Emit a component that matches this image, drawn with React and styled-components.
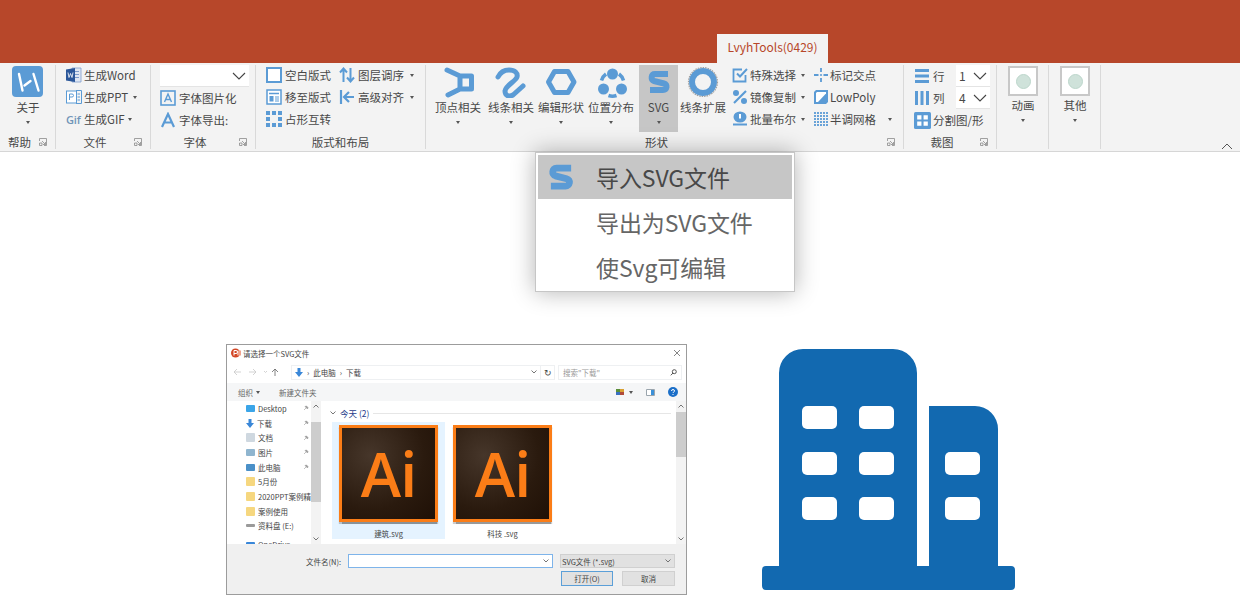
import React from "react";
import styled, { createGlobalStyle } from "styled-components";

const BLUE = "#5B9BD5";
const CJK = `"Noto Sans CJK SC", "Noto Sans", sans-serif`;

const GlobalStyle = createGlobalStyle`
  html, body {
    margin: 0;
    height: 595px;
    overflow: hidden;
    background: #ffffff;
    font-family: ${CJK};
    color: #484848;
  }
  * { box-sizing: border-box; }
`;

// Small shared pieces
const Caret = styled.span`
  display: inline-block;
  flex: none;
  width: 0;
  height: 0;
  border-left: 2.5px solid transparent;
  border-right: 2.5px solid transparent;
  border-top: 3px solid #555;
  margin-left: ${({ $gap }) => $gap ?? 0}px;
`;

const Icon = ({ size = 16, box = 16, children }) => (
  <svg width={size} height={size} viewBox={`0 0 ${box} ${box}`} style={{ flex: "none" }}>
    {children}
  </svg>
);

const Chevron = () => (
  <svg width="14" height="8" viewBox="0 0 14 8">
    <path d="M1 1l6 6 6-6" fill="none" stroke="#444" strokeWidth="1.1" />
  </svg>
);

const Launcher = () => (
  <svg width="8" height="8" viewBox="0 0 8 8">
    <path d="M.5 3V.5h7v7H5M3 3l3.5 3.5M6.5 4v2.5H4M.5 5h2.5v2.5H.5z" fill="none" stroke="#8a8a8a" strokeWidth=".8" />
  </svg>
);

const BlockS = ({ size = 32 }) => (
  <Icon size={size} box={32}>
    <path d="M25 8H12C8 8 7.5 14 11 15l10 2.500C25 18.500 24 24 20 24H7" fill="none" stroke={BLUE} strokeWidth="6" />
  </Icon>
);

// Ribbon icons
const icons = {
  logo: (
    <Icon size={32} box={32}>
      <rect width="31" height="31" rx="4" fill={BLUE} />
      <path d="M7 8l3.500 16.500M21.500 8l5 16.500M12.500 19.500l6-4.500" stroke="#fff" strokeWidth="2.400" strokeLinecap="round" fill="none" />
    </Icon>
  ),
  word: (
    <Icon>
      <path d="M6 1h9v14H6z" fill="#dfe7f3" stroke="#7d9ccc" strokeWidth=".8" />
      <path d="M9 4.500h4M9 7.500h4M9 10.500h4" stroke="#7d9ccc" />
      <path d="M0 2.500L9 1v14L0 13.500z" fill="#2b579a" />
      <path d="M2 5.500l1 5 1.500-4 1.500 4 1-5" stroke="#fff" fill="none" strokeWidth=".8" />
    </Icon>
  ),
  ppt: (
    <Icon>
      <rect x=".5" y="2" width="10" height="12" fill="#fff" stroke={BLUE} />
      <path d="M3.500 11V5h2.500a1.500 1.500 0 010 3H3.500" fill="none" stroke={BLUE} />
      <path d="M10 1.500h5.500v13H10M11.500 5H14M11.500 8H14M11.500 11H14" fill="none" stroke={BLUE} />
    </Icon>
  ),
  boxA: (
    <Icon>
      <rect x="1" y="1" width="14" height="14" fill="none" stroke={BLUE} strokeWidth="1.600" />
      <path d="M4.500 12L8 4l3.500 8M5.800 9.500h4.400" fill="none" stroke={BLUE} strokeWidth="1.400" />
    </Icon>
  ),
  plainA: (
    <Icon>
      <path d="M2 15L8 2l6 13M4.500 10.500h7" fill="none" stroke={BLUE} strokeWidth="2.200" />
    </Icon>
  ),
  blank: (
    <Icon>
      <rect x="1" y="1" width="14" height="14" fill="#fff" stroke={BLUE} strokeWidth="2" />
    </Icon>
  ),
  layout: (
    <Icon>
      <rect x="1" y="1" width="14" height="14" fill="#fff" stroke={BLUE} strokeWidth="1.500" />
      <path d="M3 4.500h10" stroke={BLUE} strokeWidth="1.500" />
      <path d="M3.500 7h4v5.500h-4z" fill={BLUE} />
      <path d="M9 8h4M9 10h4M9 12h4" stroke={BLUE} />
    </Icon>
  ),
  dots: (
    <Icon>
      <path d="M0 0h4v4H0zM6 0h4v4H6zM12 0h4v4h-4zM0 6h4v4H0zM12 6h4v4h-4zM0 12h4v4H0zM6 12h4v4H6zM12 12h4v4h-4z" fill={BLUE} />
    </Icon>
  ),
  upDown: (
    <Icon>
      <path d="M4.500 15V2M1 5.500l3.500-4 3.500 4M11.500 1v13M8 10.500l3.500 4 3.500-4" fill="none" stroke={BLUE} strokeWidth="2" />
    </Icon>
  ),
  alignLeft: (
    <Icon>
      <path d="M2 1v14M15 8H6M10 3L5 8l5 5" fill="none" stroke={BLUE} strokeWidth="2.200" />
    </Icon>
  ),
  check: (
    <Icon>
      <path d="M13.500 8v6.500h-12v-12H10" fill="none" stroke={BLUE} strokeWidth="1.800" />
      <path d="M5 6.500l3 3L15 2" fill="none" stroke={BLUE} strokeWidth="2" />
    </Icon>
  ),
  percent: (
    <Icon>
      <circle cx="4" cy="4" r="3" fill={BLUE} />
      <circle cx="12" cy="12" r="3" fill={BLUE} />
      <path d="M2 14L14 2" stroke={BLUE} strokeWidth="2.200" />
    </Icon>
  ),
  bool: (
    <Icon>
      <ellipse cx="8" cy="6" rx="6.500" ry="5.500" fill={BLUE} />
      <rect x="7" y="3" width="2" height="4.500" fill="#fff" />
      <path d="M1 13.500h14" stroke={BLUE} strokeWidth="2" />
    </Icon>
  ),
  cross: (
    <Icon>
      <path d="M8 1v4M8 11v4M1 8h4.500M10.500 8H15" stroke={BLUE} strokeWidth="1.800" />
      <circle cx="8" cy="8" r="1" fill={BLUE} />
    </Icon>
  ),
  lowPoly: (
    <Icon>
      <path d="M3 1h12v12l-2 2H1V3z" fill={BLUE} />
      <path d="M4 3h9v1.500L5 13H3V4z" fill="#fff" />
    </Icon>
  ),
  grid: (
    <Icon>
      <path d="M2 1v14M5 1v14M8 1v14M11 1v14M14 1v14" stroke={BLUE} strokeWidth="1.800" strokeDasharray="2 1" fill="none" />
    </Icon>
  ),
  rows: (
    <Icon>
      <path d="M1 2.500h14M1 8h14M1 13.500h14" stroke={BLUE} strokeWidth="3" />
    </Icon>
  ),
  cols: (
    <Icon>
      <path d="M2.500 1v14M8 1v14M13.500 1v14" stroke={BLUE} strokeWidth="3" />
    </Icon>
  ),
  split: (
    <Icon size={17}>
      <rect width="16" height="16" rx="1.500" fill={BLUE} />
      <path d="M3 3h4v4H3zM9 3h4v4H9zM3 9h4v4H3zM9 9h4v4H9z" fill="#fff" />
    </Icon>
  ),
  vertex: (
    <Icon size={32} box={32}>
      <path d="M5 4l13 6h11.500v13H18L6 29M18 10v13" fill="none" stroke={BLUE} strokeWidth="5" strokeLinecap="round" strokeLinejoin="round" />
    </Icon>
  ),
  curve: (
    <Icon size={32} box={32}>
      <path d="M3 11C6 5 11 4 14 4c6 0 9 3 8 7-1 4-11 8-12 14 0 5 4 6 8 4l10-9" fill="none" stroke={BLUE} strokeWidth="5" strokeLinecap="round" />
    </Icon>
  ),
  hexagon: (
    <Icon size={32} box={32}>
      <path d="M9.500 5.500h13.500l6 10.500-6 10.500H9.500L3.500 16z" fill="none" stroke={BLUE} strokeWidth="5" strokeLinejoin="round" />
    </Icon>
  ),
  spread: (
    <Icon size={32} box={32}>
      <circle cx="17.500" cy="8" r="5.500" fill={BLUE} />
      <circle cx="8.500" cy="23" r="5.500" fill={BLUE} />
      <circle cx="26.500" cy="23" r="5.500" fill={BLUE} />
      <path d="M6.500 14.500A12 12 0 0 1 11 8M24 8a12 12 0 0 1 4.500 6.500M13.500 29.500a12 12 0 0 0 8 0" fill="none" stroke={BLUE} strokeWidth="3.500" />
    </Icon>
  ),
  expand: (
    <Icon size={32} box={32}>
      <circle cx="16" cy="16" r="11" fill="none" stroke={BLUE} strokeWidth="6" />
      <circle cx="16" cy="16" r="14.500" fill="none" stroke="#a0a0a0" strokeWidth="1.200" strokeDasharray="1.500 1" />
    </Icon>
  ),
};

// Ribbon layout
const TitleBar = styled.header`
  height: 63px;
  background: #b7472a;
  padding-left: 717px;
  display: flex;
  align-items: flex-end;
`;

const ActiveTab = styled.div`
  width: 111px;
  height: 29px;
  background: #f3f3f3;
  color: #b7472a;
  font-size: 12px;
  line-height: 26px;
  text-align: center;
`;

const Ribbon = styled.section`
  position: relative;
  height: 89px;
  padding-top: 2px;
  background: #f3f3f3;
  border-bottom: 1px solid #d6d6d6;
  display: flex;
`;

const CollapseMark = styled.svg`
  position: absolute;
  right: 7px;
  bottom: 1px;
  width: 12px;
  height: 7px;
`;

const Group = styled.div`
  width: ${({ $w }) => $w}px;
  height: 84px;
  flex: none;
  border-right: 1px solid #d9d9d9;
  display: flex;
  flex-direction: column;
`;

const GroupBody = styled.div`
  height: 67px;
  display: flex;
  padding-left: ${({ $pad }) => $pad ?? 0}px;
  gap: ${({ $gap }) => $gap ?? 0}px;
`;

const Caption = styled.div`
  height: 17px;
  display: flex;
  align-items: center;
  font-size: 11.5px;
  line-height: 17px;
  padding-top: 3px;
`;

const CaptionText = styled.span`
  flex: 1;
  text-align: center;
`;

const LauncherSlot = styled.span`
  flex: none;
  width: 16px;
  height: 12px;
  display: flex;
  align-items: center;
`;

const Tall = styled.div`
  flex: none;
  width: ${({ $w }) => $w}px;
  height: 67px;
  padding-top: 1px;
  display: flex;
  flex-direction: column;
  align-items: center;
  background: ${({ $active }) => ($active ? "#c6c6c6" : "transparent")};
`;

const TallIcon = styled.div`
  height: ${({ $h }) => $h ?? 32}px;
  display: flex;
  align-items: center;
`;

const TallLabel = styled.div`
  font-size: 11.5px;
  line-height: 16px;
  margin-top: 1px;
  white-space: nowrap;
`;

const TallCaret = styled(Caret)`
  margin-top: 6px;
`;

const Column = styled.div`
  flex: none;
  margin-top: ${({ $top }) => $top ?? -1}px;
  margin-left: ${({ $left }) => $left ?? 0}px;
  display: flex;
  flex-direction: column;
`;

const Small = styled.div`
  height: 22px;
  display: flex;
  align-items: center;
  gap: ${({ $gap }) => $gap ?? 3}px;
  font-size: 11.5px;
  white-space: nowrap;
`;

const GifMark = styled.span`
  width: 16px;
  font-family: "Open Sans", sans-serif;
  font-size: 11px;
  font-weight: 600;
  letter-spacing: -0.2px;
  color: #6f94b8;
`;

const Combo = styled.div`
  width: ${({ $w }) => $w}px;
  height: 22px;
  background: #ffffff;
  border-bottom: 1px solid #e4e4e4;
  display: flex;
  align-items: center;
  justify-content: space-between;
  padding: 0 3px;
  font-size: 12px;
`;

const CropGrid = styled.div`
  display: grid;
  grid-template-columns: 42px 34px;
  grid-auto-rows: 22px;
  align-items: center;
`;

const CropWide = styled.div`
  grid-column: 1 / 3;
`;

const Swatch = styled.div`
  width: 30px;
  height: 30px;
  background: #ffffff;
  border: 2px solid #c8c8c8;
  display: flex;
  align-items: center;
  justify-content: center;
`;

const SwatchDot = styled.div`
  width: 15px;
  height: 15px;
  border-radius: 50%;
  background: #cfe2da;
  border: 1px solid #bcd6cb;
`;

const TallButton = ({ w, label, icon, iconHeight, caret = true, active }) => (
  <Tall $w={w} $active={active}>
    <TallIcon $h={iconHeight}>{icon}</TallIcon>
    <TallLabel>{label}</TallLabel>
    {caret && <TallCaret />}
  </Tall>
);

const SmallButton = ({ icon, label, caret, caretGap = 3, gap }) => (
  <Small $gap={gap}>
    {icon}
    <span>{label}</span>
    {caret && <Caret $gap={caretGap} />}
  </Small>
);

const RibbonGroup = ({ w, caption, launcher = true, children, pad, gap }) => (
  <Group $w={w}>
    <GroupBody $pad={pad} $gap={gap}>{children}</GroupBody>
    <Caption>
      <CaptionText>{caption}</CaptionText>
      {launcher && <LauncherSlot><Launcher /></LauncherSlot>}
    </Caption>
  </Group>
);

const shapeButtons = [
  { w: 50, label: "顶点相关", icon: icons.vertex },
  { w: 56, label: "线条相关", icon: icons.curve },
  { w: 44, label: "编辑形状", icon: icons.hexagon },
  { w: 56, label: "位置分布", icon: icons.spread },
  { w: 39, label: "SVG", icon: <BlockS />, active: true },
  { w: 50, label: "线条扩展", icon: icons.expand, caret: false },
];

const RibbonBar = () => (
  <Ribbon>
    <RibbonGroup w={56} caption="帮助" pad={12}>
      <TallButton w={32} label="关于" icon={icons.logo} />
    </RibbonGroup>
    <RibbonGroup w={95} caption="文件" pad={10}>
      <Column>
        <SmallButton icon={icons.word} label="生成Word" gap={2} />
        <SmallButton icon={icons.ppt} label="生成PPT" caret gap={2} />
        <Small $gap={2}><GifMark>Gif</GifMark><span>生成GIF</span><Caret $gap={1} /></Small>
      </Column>
    </RibbonGroup>
    <RibbonGroup w={105} caption="字体" pad={9}>
      <Column $top={0}>
        <Combo $w={89}><span /><Chevron /></Combo>
        <SmallButton icon={icons.boxA} label="字体图片化" />
        <SmallButton icon={icons.plainA} label="字体导出:" />
      </Column>
    </RibbonGroup>
    <RibbonGroup w={170} caption="版式和布局" launcher={false} pad={10} gap={8}>
      <Column>
        <SmallButton icon={icons.blank} label="空白版式" />
        <SmallButton icon={icons.layout} label="移至版式" />
        <SmallButton icon={icons.dots} label="占形互转" />
      </Column>
      <Column>
        <SmallButton icon={icons.upDown} label="图层调序" caret />
        <SmallButton icon={icons.alignLeft} label="高级对齐" caret />
      </Column>
    </RibbonGroup>
    <RibbonGroup w={478} caption="形状" pad={7}>
      {shapeButtons.map((b) => (
        <TallButton key={b.label} {...b} />
      ))}
      <Column $left={4}>
        <SmallButton icon={icons.check} label="特殊选择" caret gap={2} />
        <SmallButton icon={icons.percent} label="镜像复制" caret gap={2} />
        <SmallButton icon={icons.bool} label="批量布尔" caret gap={2} />
      </Column>
      <Column $left={8}>
        <SmallButton icon={icons.cross} label="标记交点" gap={1} />
        <SmallButton icon={icons.lowPoly} label="LowPoly" gap={1} />
        <SmallButton icon={icons.grid} label="半调网格" caret caretGap={11} gap={1} />
      </Column>
    </RibbonGroup>
    <RibbonGroup w={93} caption="裁图" pad={10}>
      <CropGrid>
        <SmallButton icon={icons.rows} label="行" />
        <Combo $w={34}>1<Chevron /></Combo>
        <SmallButton icon={icons.cols} label="列" />
        <Combo $w={34}>4<Chevron /></Combo>
        <CropWide><SmallButton icon={icons.split} label="分割图/形" gap={2} /></CropWide>
      </CropGrid>
    </RibbonGroup>
    <RibbonGroup w={52} caption="" launcher={false}>
      <TallButton w={52} label="动画" iconHeight={30} icon={<Swatch><SwatchDot /></Swatch>} />
    </RibbonGroup>
    <RibbonGroup w={52} caption="" launcher={false}>
      <TallButton w={52} label="其他" iconHeight={30} icon={<Swatch><SwatchDot /></Swatch>} />
    </RibbonGroup>
    <CollapseMark viewBox="0 0 12 7">
      <path d="M1 6l5-5 5 5" fill="none" stroke="#555" />
    </CollapseMark>
  </Ribbon>
);

// Dropdown over the page
const Menu = styled.div`
  position: absolute;
  left: 535px;
  top: 152px;
  width: 260px;
  height: 140px;
  padding: 2px;
  background: #ffffff;
  border: 1px solid #c6c6c6;
  box-shadow: 0 0 22px rgba(0, 0, 0, 0.3);
`;

const MenuItem = styled.div`
  height: ${({ $h }) => $h}px;
  display: flex;
  align-items: center;
  background: ${({ $active }) => ($active ? "#c6c6c6" : "transparent")};
  color: ${({ $active }) => ($active ? "#484848" : "#666666")};
  font-size: 23px;
  letter-spacing: -0.1px;
  white-space: nowrap;
`;

const MenuIcon = styled.span`
  width: 58px;
  padding-left: 5px;
  display: flex;
`;

// Save dialog picture
const Stage = styled.main`
  display: flex;
  align-items: flex-start;
  padding: 192px 0 0 226px;
`;

const Dialog = styled.div`
  width: 461px;
  height: 251px;
  flex: none;
  background: #ffffff;
  border: 1px solid #9c9c9c;
  display: flex;
  flex-direction: column;
  font-size: 7.5px;
  color: #555;
  overflow: hidden;
`;

const DialogTitle = styled.div`
  height: 16px;
  display: flex;
  align-items: center;
  padding: 0 5px 0 4px;
  gap: 2px;
  color: #444;
`;

const Spacer = styled.div`
  flex: 1;
`;

const AddressRow = styled.div`
  height: 22px;
  display: flex;
  align-items: center;
  padding: 2px 5px 2px 6px;
  color: #444;
`;

const NavArrows = styled.div`
  width: 58px;
  flex: none;
  display: flex;
  align-items: center;
  gap: 7px;
`;

const PathBox = styled.div`
  width: 250px;
  height: 15px;
  flex: none;
  border: 1px solid #eef0f2;
  display: flex;
  align-items: center;
  gap: 4px;
  padding: 0 3px;
`;

const RefreshBox = styled.div`
  width: 14px;
  height: 15px;
  flex: none;
  border: 1px solid #eef0f2;
  border-left: none;
  font-size: 9px;
  text-align: center;
  line-height: 13px;
`;

const SearchBox = styled.div`
  width: 124px;
  height: 15px;
  margin-left: 3px;
  flex: none;
  border: 1px solid #eef0f2;
  display: flex;
  align-items: center;
  justify-content: space-between;
  padding: 0 4px;
  color: #999;
`;

const CommandBar = styled.div`
  height: 18px;
  background: #f5f6f7;
  display: flex;
  align-items: center;
  padding: 0 8px 0 11px;
  gap: 19px;
  color: #666;
`;

const CommandGroup = styled.div`
  display: flex;
  align-items: center;
  gap: ${({ $gap }) => $gap}px;
`;

const DialogBody = styled.div`
  height: 143px;
  display: flex;
  background: #ffffff;
`;

const Sidebar = styled.div`
  width: 84px;
  flex: none;
  padding: 0 0 0 19px;
  overflow: hidden;
`;

const SideRow = styled.div`
  height: 14.7px;
  margin-top: ${({ $top }) => $top ?? 0}px;
  display: flex;
  align-items: center;
  gap: 3px;
  white-space: nowrap;
  color: #444;
`;

const SideIcon = styled.span`
  width: 9px;
  height: ${({ $h }) => $h ?? 7}px;
  flex: none;
  background: ${({ $c }) => $c};
  border-radius: 1px;
`;

const SideText = styled.span`
  flex: 1;
  overflow: hidden;
`;

const Pin = styled.svg`
  width: 6px;
  height: 6px;
  flex: none;
  margin-right: 2px;
`;

const ScrollTrack = styled.div`
  width: 10px;
  flex: none;
  background: #f3f3f3;
  display: flex;
  flex-direction: column;
  align-items: center;
  justify-content: space-between;
  padding: 3px 0;
  position: relative;
  font-size: 0;
`;

const ScrollThumb = styled.div`
  position: absolute;
  left: 0;
  right: 0;
  top: ${({ $top }) => $top}px;
  height: ${({ $h }) => $h}px;
  background: #cdcdcd;
`;

const Files = styled.div`
  flex: 1;
  padding: 5px 0 0 11px;
  min-width: 0;
`;

const FileHeader = styled.div`
  height: 14px;
  margin-left: -2px;
  display: flex;
  align-items: center;
  gap: 4px;
  font-size: 8.5px;
  color: #1e3a8a;
`;

const HeaderRule = styled.div`
  flex: 1;
  height: 1px;
  margin-right: 5px;
  background: #e6e6e6;
`;

const TileRow = styled.div`
  margin-top: 2px;
  display: flex;
  gap: 1px;
`;

const Tile = styled.div`
  width: 113px;
  height: 117px;
  padding-top: 3px;
  background: ${({ $selected }) => ($selected ? "#e5f3ff" : "transparent")};
  display: flex;
  flex-direction: column;
  align-items: center;
  color: #444;
`;

const AiBox = styled.div`
  width: 99px;
  height: 97px;
  flex: none;
  border: 3.5px solid #fb7d17;
  background: radial-gradient(circle at 30% 30%, #46362a 0%, #2a1a0e 60%, #1f1006 100%);
  box-shadow: 0 1.5px 1px rgba(0, 0, 0, 0.4);
  display: flex;
  align-items: center;
  justify-content: center;
  color: #fb7d17;
  font-family: "Open Sans", sans-serif;
  font-weight: 600;
  font-size: 61px;
  line-height: 1;
  letter-spacing: -1px;
`;

const TileName = styled.div`
  margin-top: 6px;
`;

const DialogFooter = styled.div`
  flex: 1;
  background: #f0f0f0;
  display: grid;
  grid-template-columns: 114px 205px 115px;
  column-gap: 7px;
  grid-template-rows: 14px 15px;
  row-gap: 3px;
  padding: 10px 0 0 0;
  align-items: center;
  color: #444;
`;

const FieldLabel = styled.div`
  grid-column: 1;
  text-align: right;
  padding-right: 0;
`;

const FieldInput = styled.div`
  height: 14px;
  background: #ffffff;
  border: 1px solid #7eb4ea;
  display: flex;
  align-items: center;
  justify-content: flex-end;
  padding-right: 3px;
`;

const TypeSelect = styled.div`
  height: 14px;
  background: #e1e1e1;
  border: 1px solid #d0d0d0;
  display: flex;
  align-items: center;
  justify-content: space-between;
  padding: 0 3px 0 1px;
`;

const ButtonRow = styled.div`
  grid-column: 3;
  padding-left: 1px;
  display: flex;
  gap: 9px;
`;

const DialogButton = styled.div`
  width: ${({ $w }) => $w}px;
  height: 15px;
  background: #e1e1e1;
  border: 1px solid ${({ $primary }) => ($primary ? "#5b9fd8" : "#d0d0d0")};
  text-align: center;
  line-height: 13px;
`;

const MiniChevron = ({ up }) => (
  <svg width="6" height="4" viewBox="0 0 6 4">
    <path d={up ? "M.5 3.500L3 1l2.500 2.500" : "M.5 .5L3 3l2.500-2.500"} fill="none" stroke="#666" strokeWidth=".9" />
  </svg>
);

const BlueArrow = () => (
  <svg width="8" height="9" viewBox="0 0 8 9">
    <path d="M2.500 0h3v4H8L4 9 0 4h2.500z" fill="#3a87d8" />
  </svg>
);

const PinMark = () => (
  <Pin viewBox="0 0 6 6">
    <path d="M1 5l2-2M2 1.500L4.500 4 5 2.500 3.500 1z" fill="#999" stroke="#999" strokeWidth=".6" />
  </Pin>
);

const sideItems = [
  { label: "Desktop", c: "#3ba5e8", pin: true },
  { label: "下载", arrow: true, pin: true },
  { label: "文档", c: "#cfd8e0", h: 9, pin: true },
  { label: "图片", c: "#8fb5cf", pin: true },
  { label: "此电脑", c: "#4a90c8", pin: true },
  { label: "5月份", c: "#f6d77f", h: 9 },
  { label: "2020PPT案例精", c: "#f6d77f", h: 9 },
  { label: "案例使用", c: "#f6d77f", h: 9 },
  { label: "资料盘 (E:)", c: "#9a9a9a", h: 3 },
  { label: "OneDrive", c: "#3a87d8", h: 5, top: 4 },
];

const FileDialog = () => (
  <Dialog>
    <DialogTitle>
      <svg width="10" height="10" viewBox="0 0 10 10">
        <circle cx="4.500" cy="5" r="4.500" fill="#d24726" />
        <path d="M6 2.500h4v5H6z" fill="#f1a48d" />
        <path d="M3 7.500v-5h2a1.500 1.500 0 010 3H3" fill="none" stroke="#fff" />
      </svg>
      <span>请选择一个SVG文件</span>
      <Spacer />
      <svg width="8" height="8" viewBox="0 0 8 8">
        <path d="M1 1l6 6M7 1L1 7" stroke="#666" strokeWidth=".8" />
      </svg>
    </DialogTitle>
    <AddressRow>
      <NavArrows>
        <svg width="46" height="8" viewBox="0 0 46 8">
          <path d="M1 4h7M4 1L1 4l3 3M16 4h7M20 1l3 3-3 3" fill="none" stroke="#c8c8c8" strokeWidth=".8" />
          <path d="M31 3l1.500 1.500L34 3" fill="none" stroke="#c8c8c8" strokeWidth=".8" />
          <path d="M42 8V1M39 4l3-3 3 3" fill="none" stroke="#666" strokeWidth=".8" />
        </svg>
      </NavArrows>
      <PathBox>
        <BlueArrow />
        <span>›</span>
        <span>此电脑</span>
        <span>›</span>
        <span>下载</span>
        <Spacer />
        <MiniChevron />
      </PathBox>
      <RefreshBox>↻</RefreshBox>
      <SearchBox>
        <span>搜索"下载"</span>
        <svg width="7" height="7" viewBox="0 0 7 7">
          <circle cx="4.300" cy="2.700" r="2" fill="none" stroke="#555" />
          <path d="M3 4L.8 6.300" stroke="#555" />
        </svg>
      </SearchBox>
    </AddressRow>
    <CommandBar>
      <CommandGroup $gap={3}>组织<Caret /></CommandGroup>
      <span>新建文件夹</span>
      <Spacer />
      <CommandGroup $gap={13}>
        <CommandGroup $gap={5}>
          <svg width="8" height="6" viewBox="0 0 8 6">
            <path d="M0 0h4v3H0z" fill="#5b8f3a" />
            <path d="M4 0h4v3H4z" fill="#d9a032" />
            <path d="M0 3h4v3H0z" fill="#3a6fc0" />
            <path d="M4 3h4v3H4z" fill="#b04a3a" />
          </svg>
          <Caret />
        </CommandGroup>
        <svg width="9" height="7" viewBox="0 0 9 7">
          <path d="M.5 .5h8v6h-8z" fill="#fff" stroke="#9aa5ad" />
          <path d="M5 1h3v5H5z" fill="#3a90d8" />
        </svg>
        <svg width="10" height="10" viewBox="0 0 10 10">
          <circle cx="5" cy="5" r="5" fill="#1c6fc8" />
          <path d="M3.500 4a1.500 1.500 0 113 0c0 1-1.500 1-1.500 2M5 7v1" fill="none" stroke="#fff" />
        </svg>
      </CommandGroup>
    </CommandBar>
    <DialogBody>
      <Sidebar>
        {sideItems.map((item) => (
          <SideRow key={item.label} $top={item.top}>
            {item.arrow ? <BlueArrow /> : <SideIcon $c={item.c} $h={item.h} />}
            <SideText>{item.label}</SideText>
            {item.pin && <PinMark />}
          </SideRow>
        ))}
      </Sidebar>
      <ScrollTrack>
        <ScrollThumb $top={21} $h={80} />
        <MiniChevron up />
        <MiniChevron />
      </ScrollTrack>
      <Files>
        <FileHeader>
          <MiniChevron />
          <span>今天 (2)</span>
          <HeaderRule />
        </FileHeader>
        <TileRow>
          <Tile $selected>
            <AiBox>Ai</AiBox>
            <TileName>建筑.svg</TileName>
          </Tile>
          <Tile>
            <AiBox>Ai</AiBox>
            <TileName>科技 .svg</TileName>
          </Tile>
        </TileRow>
      </Files>
      <ScrollTrack>
        <ScrollThumb $top={11} $h={45} />
        <MiniChevron up />
        <MiniChevron />
      </ScrollTrack>
    </DialogBody>
    <DialogFooter>
      <FieldLabel>文件名(N):</FieldLabel>
      <FieldInput><MiniChevron /></FieldInput>
      <TypeSelect><span>SVG文件 (*.svg)</span><MiniChevron /></TypeSelect>
      <ButtonRow>
        <DialogButton $w={52} $primary>打开(O)</DialogButton>
        <DialogButton $w={53}>取消</DialogButton>
      </ButtonRow>
    </DialogFooter>
  </Dialog>
);

const Building = styled.svg`
  width: 254px;
  height: 243px;
  flex: none;
  margin: 5px 0 0 75px;
`;

const buildingWindows = [
  [40, 57], [97, 57], [40, 103], [97, 103], [40, 148], [97, 148], [183, 103], [183, 148],
];

const BuildingIcon = () => (
  <Building viewBox="0 0 254 243">
    <path
      d="M4 217h13V24A24 24 0 0 1 41 0h90a24 24 0 0 1 24 24v193h12V57h46a23 23 0 0 1 23 23v137h13a4 4 0 0 1 4 4v16a4 4 0 0 1-4 4H4a4 4 0 0 1-4-4v-16a4 4 0 0 1 4-4z"
      fill="#1269b0"
    />
    {buildingWindows.map(([x, y]) => (
      <rect key={`${x}-${y}`} x={x} y={y} width="35" height="23" rx="5" fill="#ffffff" />
    ))}
  </Building>
);

export default function App() {
  return (
    <>
      <GlobalStyle />
      <TitleBar>
        <ActiveTab>LvyhTools(0429)</ActiveTab>
      </TitleBar>
      <RibbonBar />
      <Stage>
        <FileDialog />
        <BuildingIcon />
      </Stage>
      <Menu>
        <MenuItem $h={44} $active>
          <MenuIcon><BlockS size={36} /></MenuIcon>
          导入SVG文件
        </MenuItem>
        <MenuItem $h={45}>
          <MenuIcon />
          导出为SVG文件
        </MenuItem>
        <MenuItem $h={45}>
          <MenuIcon />
          使Svg可编辑
        </MenuItem>
      </Menu>
    </>
  );
}
